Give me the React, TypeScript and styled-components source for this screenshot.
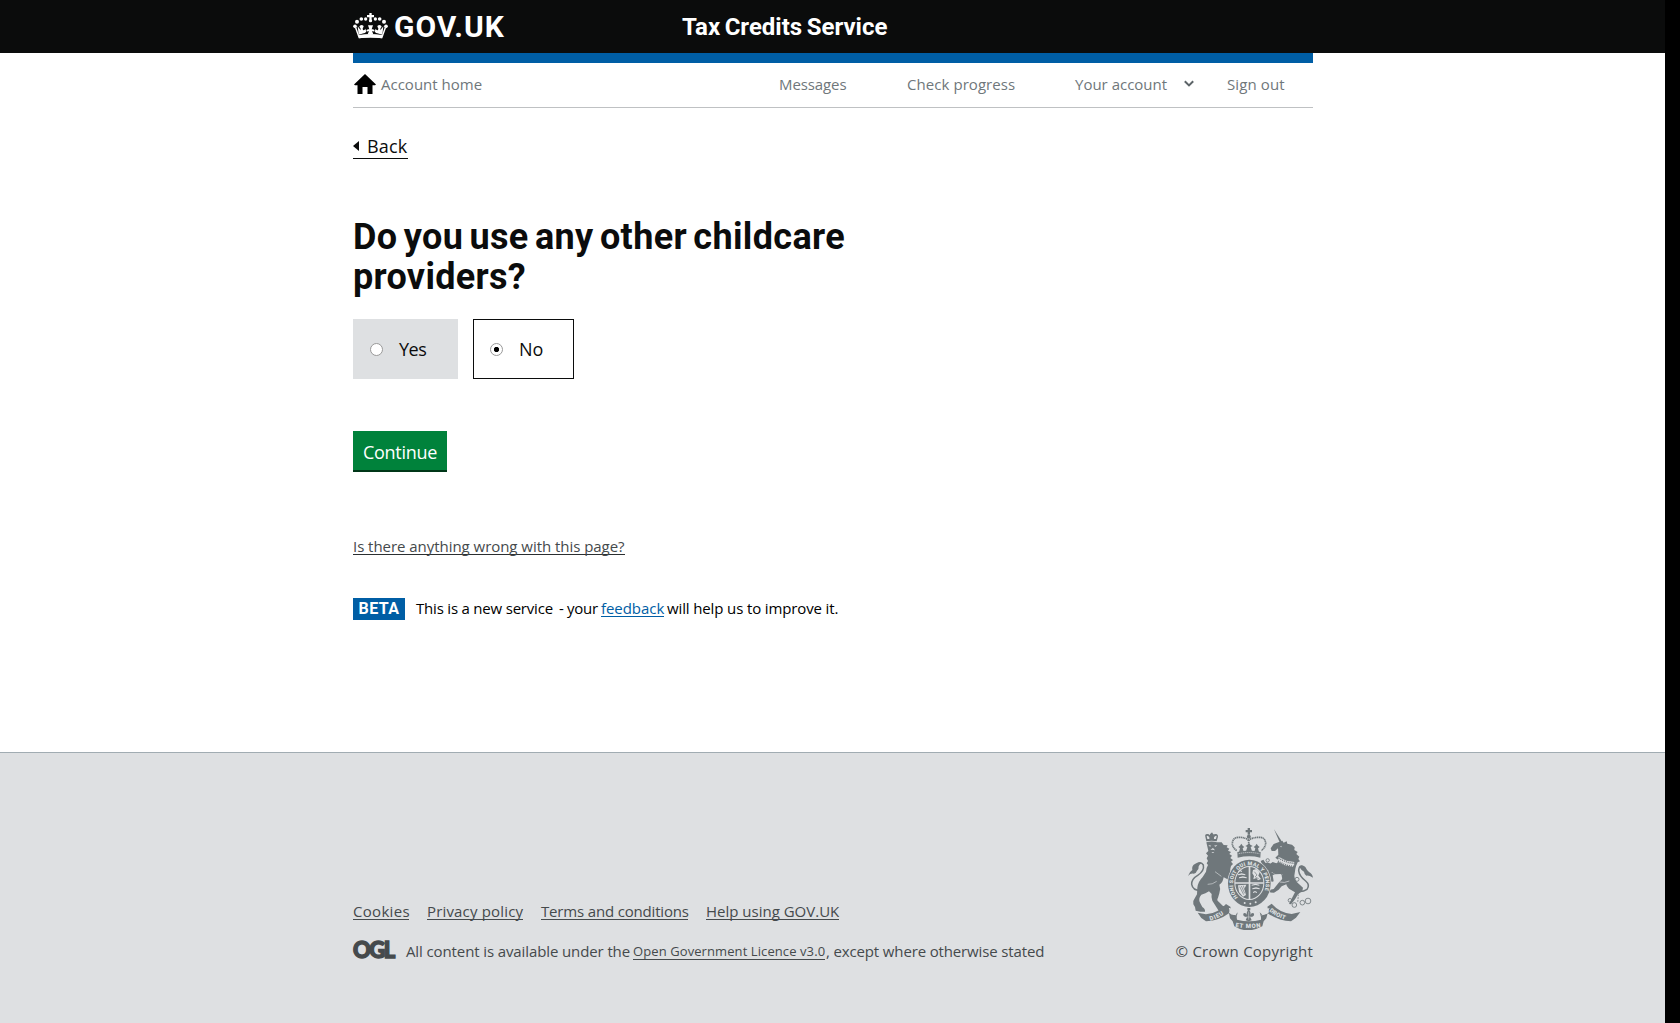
import React from "react";
import styled, { createGlobalStyle } from "styled-components";

const ink = "#0b0c0c";
const blue = "#005ea5";
const footerInk = "#454a4c";
const crestGrey = "#6f777b";
const panel = "#dee0e2";
const body = '"Open Sans", "Noto Sans", sans-serif';

const Global = createGlobalStyle`
  * { box-sizing: border-box; }
  html, body { margin: 0; background: #000; }
  body { font-family: ${body}; color: ${ink}; overflow: hidden; }
`;

const Page = styled.div`
  width: 1665px;
  height: 1023px;
  background: #fff;
  display: flex;
  flex-direction: column;
`;
const Wrap = styled.div`
  width: 960px;
  margin-left: 353px;
`;
const Label = styled.span<{ $ls?: number; $ws?: number }>`
  white-space: pre;
  letter-spacing: ${p => p.$ls ?? 0}px;
  word-spacing: ${p => p.$ws ?? 0}px;
`;

const Header = styled.header`
  height: 53px;
  background: ${ink};
  color: #fff;
`;
const HeaderRow = styled(Wrap)`
  display: flex;
  height: 53px;
  align-items: flex-start;
`;
const Brand = styled.a`
  display: flex;
  width: 328px;
  font: 700 30px/35px Roboto, sans-serif;
  padding-top: 9px;
  svg { margin: 4px 6px 0 0; flex: none; }
`;
const ServiceName = styled.a`
  font: 700 24px/28px Roboto, sans-serif;
  padding: 13px 0 0 1px;
`;

const Nav = styled(Wrap)`
  border-top: 10px solid ${blue};
  border-bottom: 1px solid #bfc1c3;
  height: 55px;
  display: flex;
  align-items: flex-start;
  padding-top: 11px;
  color: #6f777b;
  font-size: 15px;
  line-height: 20px;
`;
const NavItem = styled.a<{ $w: number }>`
  width: ${p => p.$w}px;
  display: flex;
  svg { flex: none; }
`;
const HomeIcon = styled.svg`margin: 0 5px 0 1px;`;
const Chevron = styled.svg`margin: 6px 0 0 17px;`;

const Main = styled.main`
  width: 960px;
  margin-left: 353px;
  height: 644px;
  display: flex;
  flex-direction: column;
  align-items: flex-start;
`;
const Back = styled.a`
  margin-top: 27px;
  height: 24px;
  width: 55px;
  border-bottom: 1px solid ${ink};
  font-size: 18px;
  line-height: 23px;
  display: flex;
  svg { margin: 6px 8px 0 0; flex: none; }
`;
const Title = styled.h1`
  margin: 58px 0 0;
  font: 700 36px/40px Roboto, sans-serif;
  display: flex;
  flex-direction: column;
`;
const Choices = styled.div`
  margin-top: 22px;
  display: flex;
  gap: 15px;
`;
const Choice = styled.label<{ $on?: boolean; $w: number }>`
  width: ${p => p.$w}px;
  height: 60px;
  border: 1px solid ${p => (p.$on ? ink : panel)};
  background: ${p => (p.$on ? "#fff" : panel)};
  display: flex;
  align-items: center;
  padding-left: 16px;
  gap: 16px;
  font-size: 18px;
`;
const Radio = styled.i<{ $on?: boolean }>`
  width: 13px;
  height: 13px;
  border-radius: 50%;
  border: 1px solid #999;
  background: ${p => (p.$on ? "radial-gradient(circle, #000 2.2px, #fff 3px)" : "#fff")};
`;
const Button = styled.button`
  margin: 52px 0 0;
  width: 94px;
  height: 39px;
  border: 0;
  padding: 3px 0 0;
  background: #00823b;
  box-shadow: 0 2px 0 #003618;
  color: #fff;
  font: 400 18px/36px ${body};
`;
const Report = styled.a`
  margin-top: 67px;
  height: 18px;
  border-bottom: 1px solid #2b2f31;
  font-size: 15px;
  line-height: 18px;
  color: #454a4c;
  width: 272px;
`;
const Phase = styled.div`
  margin-top: 43px;
  height: 22px;
  display: flex;
  font-size: 15px;
  line-height: 20px;
  color: #000;
`;
const Beta = styled.strong`
  width: 52px;
  margin-right: 11px;
  background: ${blue};
  color: #fff;
  text-align: center;
  font: 700 16px/21px Roboto, sans-serif;
`;
const PhasePart = styled.span<{ $w: number }>`
  width: ${p => p.$w}px;
  flex: none;
`;
const Feedback = styled.a`
  width: 63px;
  height: 19px;
  margin-right: 3px;
  color: ${blue};
  border-bottom: 1px solid ${blue};
`;

const Footer = styled.footer`
  flex: 1;
  background: ${panel};
  border-top: 1px solid #a1acb2;
  color: ${footerInk};
  font-size: 15px;
  line-height: 20px;
`;
const FooterRow = styled(Wrap)`
  display: flex;
  justify-content: space-between;
`;
const FooterLeft = styled.div`padding-top: 148px;`;
const Links = styled.div`
  display: flex;
  gap: 18px;
`;
const FootLink = styled.a<{ $w: number }>`
  width: ${p => p.$w}px;
  height: 19px;
  border-bottom: 1px solid ${footerInk};
`;
const Licence = styled.div`
  margin-top: 21px;
  display: flex;
`;
const Ogl = styled.span`
  width: 53px;
  font: 900 22px/18px Lato, sans-serif;
  letter-spacing: -1.5px;
  -webkit-text-stroke: 1.4px ${footerInk};
`;
const LicenceLink = styled.a`
  font-size: 13px;
  line-height: 21px;
  width: 192px;
  height: 19px;
  margin: 0 1px 0 3px;
  border-bottom: 1px solid ${footerInk};
`;
const Copyright = styled.div`
  padding-top: 75px;
  display: flex;
  flex-direction: column;
  align-items: flex-end;
  gap: 11px;
`;

const Crown = () => (
  <svg width="35" height="26" viewBox="39 39 105 78" fill="#fff">
    <path d="M88 39h7v6h7v7h-7v7h-7v-7h-7v-7h7z" />
    <circle cx="91.500" cy="62" r="5" />
    {[[77, 57, 5], [64, 57, 5.5], [51, 65, 6], [45, 79, 5.500], [106, 57, 5], [119, 57, 5.5], [132, 65, 6], [138, 79, 5.500]].map(([x, y, r]) => (
      <circle key={x} cx={x} cy={y} r={r} />
    ))}
    <path d="M49 82l8 23q34-6 69 0l8-23 4 2-11 31q-35-5-71 0L45 84z" />
    <path d="M56 104L53 79l9 12q1-7-4-11 1-5 7-5 6 0 6 5-5 4-2 11 5 0 7-5l3 9q-5 5-8 5zM127 104l3-25-9 12q-1-7 4-11-1-5-7-5-6 0-6 5 5 4 2 11-5 0-7-5l-3 9q5 5 8 5z" />
    <path d="M83 103l4-10q-5 3-8-1 1-6 9-4l-4-12h15l-4 12q8-2 9 4-3 4-8 1l4 10q-8-1-17 0z" />
    <path d="M57 112q34-6 69 0v3q-35-5-69 0z" />
  </svg>
);

const bars: [number, number, number, number][] = [
  [219, 168, 12, 3], [219, 178, 22, 3], [222, 187, 23, 3], [260, 209, 23, 3], [262, 220, 22, 3], [264, 231, 12, 3],
];

const Crest = () => (
  <svg width="125" height="102" viewBox="69 39 375 306" fill={crestGrey} stroke="none">
    {/* lion tail */}
    <path d="M109 226Q84 228 80 208Q79 192 98 181Q119 167 115 150Q109 140 99 145" fill="none" stroke={crestGrey} strokeWidth="4.500" />
    <path d="M69 183q4-13 13-18-3-14 9-19 9-6 20-2-8 4-10 10 1 9-5 13-3 9-10 9-9-2-17 7z" />
    {/* lion crown */}
    <path d="M124 79l-3-14q-2-7 5-8 5-1 9 4v-4q5-4 9 0v4q4-5 10-4 6 2 5 8l-4 14q-15-4-31 0z" />
    <path d="M127 72l-2-9q4-2 8 4v5zm26 0l2-9q-4-2-8 4v5z" fill={panel} />
    <path d="M138 53h5v14h-5zM135 57h11v3h-11z" />
    {/* lion head, mane and body */}
    <path d="M124 82q16-5 32 0l14 0 6 8 12 1-3 6 8 4-4 6 9 4-5 6 8 5-5 7 8 6-6 5 6 7-6 6q-4 10-2 22l13 6 8 11-2 10-9 2-5-7-9-2-16-8q-3 18-13 22 5 12 0 26l-4 13q-5 7 2 12l12 12 17 6q6 5 0 11l-30-3-18-29q-4-10-2-20l-8-8q-10 7-23 10-9 10-5 22l8 15q9 5 8 14l-14 0-14-3-2-11-5-8q-3-10 5-20l6-10 1-20q2-18 16-32l10-16q0-10 6-20l-4-5 4-7-4-8 4-8-6-7 7-7-2-9z" />
    <path d="M130 90l9 2-4 3zm17 2l10-2-5 5zM136 104l8-5 6 7-7-2zM139 111l9 0-4 3z" fill={panel} />
    <path d="M128 208q14 1 27-9M150 170l19 14" fill="none" stroke={panel} strokeWidth="1.800" />
    {/* unicorn tail */}
    <path d="M388 225Q408 235 426 223Q436 210 422 198Q403 184 401 167Q402 151 412 153" fill="none" stroke={crestGrey} strokeWidth="4.500" />
    <path d="M403 156q10-9 18 0 4 9 11 15 10 5 12 17-13-8-20-6-6-4-7-12-8-4-14-14z" />
    {/* unicorn horn, head and body */}
    <path d="M327 43l23 36-5 5z" />
    <path d="M352 77l4 6 9-4 2 7 14 3 8 8-1 8 10 6-4 6 9 8-3 7 5 7-7 3q-5 10-7 20l-3 20q1 16 13 24l13 12-2 10-13 10-9 15-12 15-6-1 9-18 9-17-18-11q-8-7-8-13l-14 6-9 10-14 9-18-1 3-7 14-3 15-19 10-10q2-7-4-16l-16 1-10-6-12 10-6-3 8-12-16-9-8-20 8-4 6 9 15 3 7-5 11 4 10-7-13-10 9-9-1-19-9 8-10 0-3-8 9-13z" />
    <path d="M345 95l5-3-1 5zM341 125l23 12 24 4-1 15-28-5-21-11z" fill={panel} />
    <path d="M341 129q21 14 47 16M339 138q21 14 48 16" stroke={crestGrey} strokeDasharray="3 3" fill="none" strokeWidth="4.500" />
    <path d="M330 183q15 4 22-4M344 201q14 4 29-3" stroke={panel} fill="none" strokeWidth="2" />
    <path d="M305 142l12 4 6 13 11 5-5 6-14-6-12-6zM307 177l10-5 14 5-8 4 3 18-6 2-6-14z" />
    {/* shield, garter and royal crown */}
    <ellipse cx="253" cy="205" rx="66" ry="73" fill={panel} />
    <ellipse cx="253" cy="205" rx="64" ry="71" />
    <ellipse cx="253" cy="204" rx="45" ry="51" fill={panel} />
    <ellipse cx="253" cy="204" rx="42" ry="48" />
    <path d="M251 155h5v47h40v4h-40v47h-5v-47h-41v-4h41z" fill={panel} />
    {bars.map(([x, y, w, h]) => <path key={y} d={`M${x} ${y}l${w / 2} -3 ${w / 2} 3v${h}l${-w / 2} -2 ${-w / 2} 2z`} fill={panel} />)}
    <path d="M264 165l10-3 10 10-4 10 8 10-9 4-5-7-9 4 2-10-5-8zM219 211l25-2-6 13 5 18-9 5-12-14z" fill={panel} />
    <path d="M268 170l8 10-6 6M272 187l9 4M224 215l12 24M229 213l10 22M235 212l4 12" fill="none" stroke={crestGrey} strokeWidth="2" />
    <path id="garter" d="M219 247A49 56 0 1 1 287 247" fill="none" />
    <text fontFamily="Roboto, sans-serif" fontSize="16" fontWeight="900" fill={panel} letterSpacing="0.6">
      <textPath href="#garter">HONI SOIT QUI MAL Y PENSE</textPath>
    </text>
    <g fill={panel}><circle cx="239" cy="264" r="3" /><circle cx="256" cy="266" r="3" /><circle cx="272" cy="262" r="3" /></g>
    <path d="M215 107Q201 96 202 84Q204 67 221 67Q244 67 251 77Q259 67 284 67Q300 67 302 84Q302 96 289 107" fill="none" stroke={crestGrey} strokeWidth="5" strokeDasharray="4 1.500" />
    <path d="M251 75v30" fill="none" stroke={crestGrey} strokeWidth="5" strokeDasharray="4 2" />
    <path d="M248 39h7v6h6v7h-6v7h-7v-7h-6v-7h6z" />
    <circle cx="251.500" cy="65" r="6" />
    <path d="M217 111q35-9 70 0l-1 17q-33-8-68 0z" />
    <path d="M222 112l3-12-5-4 5-4 4-6 4 6 5 4-5 4 3 10zM268 110l3-10-5-4 5-4 4-6 4 6 5 4-5 4 3 12zM243 109l4-13-6-3 7-4 4-6 4 6 7 4-6 3 4 13z" />
    <path d="M221 116q31-7 62 0" stroke={panel} strokeWidth="2" strokeDasharray="4 2" fill="none" />
    {/* chain */}
    <g fill="none" stroke={crestGrey} strokeWidth="2.500">
      <circle cx="308" cy="136" r="5" /><circle cx="396" cy="193" r="6" /><circle cx="375" cy="256" r="5.500" /><circle cx="388" cy="270" r="7" />
      <circle cx="412" cy="263" r="7" /><circle cx="429" cy="258" r="8.500" /><path d="M394 200q9 23 4 62" strokeDasharray="5 3" />
    </g>
    {/* motto ribbon */}
    <path d="M98 293l25 5q35-2 60-31l14 9-5 17q9 9 20 6l6-7-3 14 1 8q37 9 72 0l0-8-4-14 8 7q12 2 20-7l-5-17 13-9q24 27 60 31l26-6-13 17-15 11q-37-1-70-24l-4 15-8 9-4 15q-45 24-84 0l-5-15-8-9-3-15q-33 24-69 24l-14-10z" />
    <path d="M193 279l4 14 17 7M312 279l-5 14-17 7" stroke={panel} fill="none" strokeWidth="3" />
    {/* fleur-de-lis */}
    <path d="M247 279h9v7h-9zM251 284q9 8 4 17 5-9 11-6 4 7-4 10l-6 2 4 9-9 3-9-3 4-9-6-2q-8-3-4-10 6-3 11 6-5-9 4-17z" />
    <path d="M251 290v24M242 306h18" stroke={panel} strokeWidth="1.500" />
    <path id="dieu" d="M136 317Q166 309 190 288" fill="none" />
    <path id="etmon" d="M211 335Q252 344 300 334" fill="none" />
    <path id="droit" d="M312 288Q335 309 375 318" fill="none" />
    <g fontFamily="Roboto, sans-serif" fontSize="18" fontWeight="900" fill={panel}>
      <text letterSpacing="2"><textPath href="#dieu">DIEU</textPath></text>
      <text letterSpacing="2"><textPath href="#etmon">ET MON</textPath></text>
      <text letterSpacing="0.500"><textPath href="#droit">DROIT</textPath></text>
    </g>
  </svg>
);

export default function App() {
  return (
    <>
      <Global />
      <Page>
        <Header>
          <HeaderRow>
            <Brand><Crown /><Label $ls={1}>GOV.UK</Label></Brand>
            <ServiceName><Label $ls={0} $ws={-1.5}>Tax Credits Service</Label></ServiceName>
          </HeaderRow>
        </Header>
        <Nav as="nav">
          <NavItem $w={426}>
            <HomeIcon width="22" height="20" viewBox="0 0 22 20" fill="#000"><path d="M11 0l11 10.500-1 .7h-2.500V20h-5v-7h-5v7h-5v-8.800H1l-1-.7z" /></HomeIcon>
            <Label>Account home</Label>
          </NavItem>
          <NavItem $w={128}><Label $ls={-0.1}>Messages</Label></NavItem>
          <NavItem $w={168}><Label $ls={0.06}>Check progress</Label></NavItem>
          <NavItem $w={152}>
            <Label>Your account</Label>
            <Chevron width="10" height="8" viewBox="0 0 10 8" fill="none" stroke="#5d6468" strokeWidth="2"><path d="M.8 1.200L5 5.400 9.200 1.200" /></Chevron>
          </NavItem>
          <NavItem $w={58}><Label $ls={0.12}>Sign out</Label></NavItem>
        </Nav>
        <Main>
          <Back>
            <svg width="6" height="10" viewBox="0 0 6 10"><path d="M0 5l6-5v10z" fill={ink} /></svg>
            <Label $ls={0.2}>Back</Label>
          </Back>
          <Title><Label $ls={0.36} $ws={-3}>Do you use any other childcare</Label><Label $ls={0.3}>providers?</Label></Title>
          <Choices>
            <Choice $w={105}><Radio /><Label $ls={-0.5}>Yes</Label></Choice>
            <Choice $w={101} $on><Radio $on /><Label>No</Label></Choice>
          </Choices>
          <Button><Label $ls={-0.3}>Continue</Label></Button>
          <Report><Label $ls={-0.04}>Is there anything wrong with this page?</Label></Report>
          <Phase>
            <Beta><Label $ls={0.4}>BETA</Label></Beta>
            <PhasePart $w={143}><Label $ls={-0.2}>This is a new service</Label></PhasePart>
            <PhasePart $w={42}><Label $ls={-0.3}>- your</Label></PhasePart>
            <Feedback><Label $ls={-0.05}>feedback</Label></Feedback>
            <Label $ls={-0.13}>will help us to improve it.</Label>
          </Phase>
        </Main>
        <Footer>
          <FooterRow>
            <FooterLeft>
              <Links>
                <FootLink $w={56}><Label $ls={0.3}>Cookies</Label></FootLink>
                <FootLink $w={96}><Label $ls={0.17}>Privacy policy</Label></FootLink>
                <FootLink $w={147}><Label $ls={-0.17}>Terms and conditions</Label></FootLink>
                <FootLink $w={133}><Label>Help using GOV.UK</Label></FootLink>
              </Links>
              <Licence>
                <Ogl>OGL</Ogl>
                <Label $ls={-0.11}>All content is available under the</Label>
                <LicenceLink><Label $ls={0.09}>Open Government Licence v3.0</Label></LicenceLink>
                <Label $ls={-0.14}>, except where otherwise stated</Label>
              </Licence>
            </FooterLeft>
            <Copyright><Crest /><Label $ls={0.23}>© Crown Copyright</Label></Copyright>
          </FooterRow>
        </Footer>
      </Page>
    </>
  );
}
